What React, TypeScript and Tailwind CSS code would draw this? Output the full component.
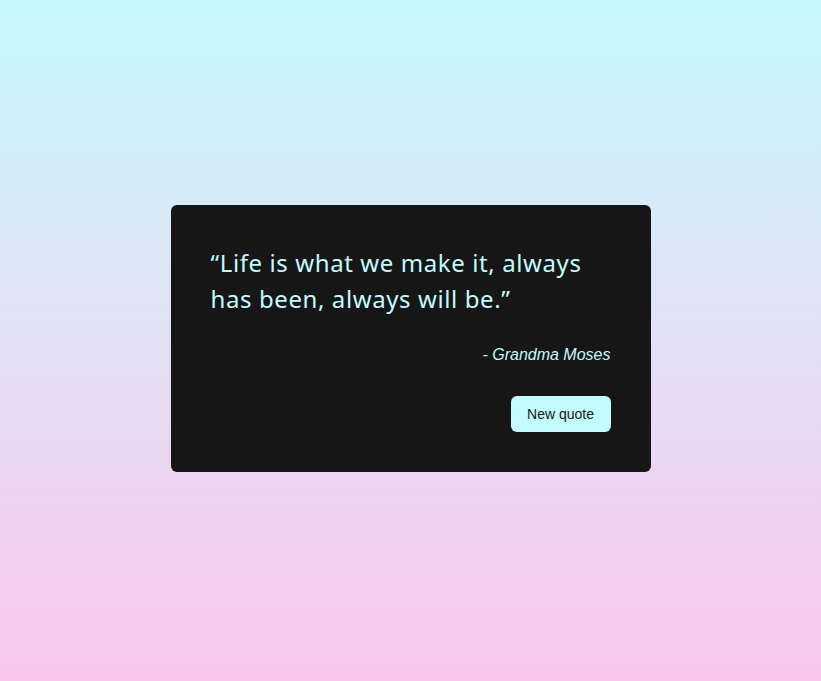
export default function App() {
  return (
    <div className="min-h-[681px] w-full bg-gradient-to-b from-[#c4f9fd] to-[#f9c6ec] flex items-center justify-center pb-1">
      <div className="w-[480px] rounded-md bg-[#161616] p-10 text-[#c4fbff]">
        <p className="text-[24px] leading-[36px] tracking-[0.025em] font-['Noto_Sans',sans-serif] font-normal">
          “Life is what we make it, always has been, always will be.”
        </p>
        <p className="mt-[26px] text-right text-[16px] leading-6 italic font-['Liberation_Sans',Arial,sans-serif]">
          - Grandma Moses
        </p>
        <div className="mt-[29px] flex justify-end">
          <button className="h-9 w-[100px] rounded-md bg-[#c4fbff] pb-px text-sm text-[#161616] font-['Liberation_Sans',Arial,sans-serif]">
            New quote
          </button>
        </div>
      </div>
    </div>
  )
}
